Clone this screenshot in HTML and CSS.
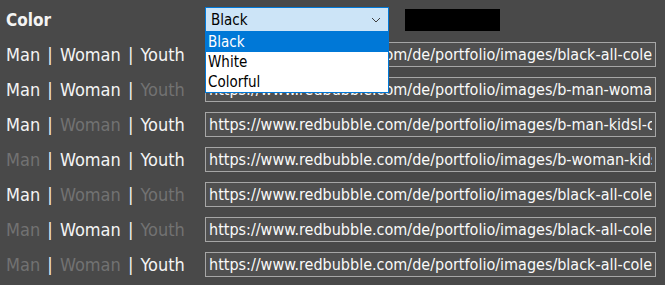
FILE: index.html
```html
<!DOCTYPE html>
<html lang="en">
<head>
  <meta charset="UTF-8" />
  <meta name="viewport" content="width=device-width, initial-scale=1.0" />
  <title>Links</title>
  <link rel="stylesheet" href="styles.css">
</head>
<body>
  <div class="table">
    <!-- color row -->
    <div class="label bold">Color</div>
    <div class="color-cell">
      <div class="select">
        <div class="select-box">
          <span>Black</span>
          <svg class="chevron" width="10" height="6" viewBox="0 0 10 6"><path d="M1 1 L5 5 L9 1" fill="none" stroke="#404040" stroke-width="1"/></svg>
        </div>
        <div class="options">
          <div class="option active">Black</div>
          <div class="option">White</div>
          <div class="option">Colorful</div>
        </div>
      </div>
      <div class="swatch"></div>
    </div>

    <!-- link rows -->
    <div class="label"><span>Man</span> | <span>Woman</span> | <span>Youth</span></div>
    <input class="link" type="text" value="https://www.redbubble.com/de/portfolio/images/black-all-colection" />

    <div class="label"><span>Man</span> | <span>Woman</span> | <span class="off">Youth</span></div>
    <input class="link" type="text" value="https://www.redbubble.com/de/portfolio/images/b-man-woman" />

    <div class="label"><span>Man</span> | <span class="off">Woman</span> | <span>Youth</span></div>
    <input class="link" type="text" value="https://www.redbubble.com/de/portfolio/images/b-man-kidsl-colection" />

    <div class="label"><span class="off">Man</span> | <span>Woman</span> | <span>Youth</span></div>
    <input class="link" type="text" value="https://www.redbubble.com/de/portfolio/images/b-woman-kids" />

    <div class="label"><span>Man</span> | <span class="off">Woman</span> | <span class="off">Youth</span></div>
    <input class="link" type="text" value="https://www.redbubble.com/de/portfolio/images/black-all-colection" />

    <div class="label"><span class="off">Man</span> | <span>Woman</span> | <span class="off">Youth</span></div>
    <input class="link" type="text" value="https://www.redbubble.com/de/portfolio/images/black-all-colection" />

    <div class="label"><span class="off">Man</span> | <span class="off">Woman</span> | <span>Youth</span></div>
    <input class="link" type="text" value="https://www.redbubble.com/de/portfolio/images/black-all-colection" />
  </div>
</body>
</html>
```
FILE: styles.css
```css
body {
  margin: 0;
  padding: 7px 0 0 6px;
  background-color: #494949;
  font-family: 'DejaVu Sans Condensed', 'DejaVu Sans', sans-serif;
  font-size: 16px;
  color: #f4f4f4;
}
.table {
  display: grid;
  grid-template-columns: 199px 451px;
  row-gap: 10px;
  align-items: center;
}
.label {
  white-space: nowrap;
  font-size: 18px;
  word-spacing: 2px;
}
.bold {
  font-weight: bold;
  font-size: 17px;
}
.off {
  color: #727272;
}
.color-cell {
  display: flex;
  align-items: center;
}
.select {
  position: relative;
  width: 184px;
}
.select-box {
  box-sizing: border-box;
  height: 25px;
  display: flex;
  align-items: center;
  justify-content: space-between;
  padding: 0 5px 0 5px;
  background-color: #cce4f7;
  border: 1px solid #0078d7;
  color: #000;
  font-size: 15px;
  word-spacing: normal;
}
.chevron {
  margin-right: 2px;
}
.options {
  position: absolute;
  top: 25px;
  left: 0;
  width: 184px;
  box-sizing: border-box;
  background-color: #fff;
  border: 1px solid #0078d7;
  border-top: none;
  z-index: 2;
}
.option {
  height: 20px;
  line-height: 20px;
  padding-left: 2px;
  color: #000;
  font-size: 15px;
}
.option.active {
  background-color: #0078d7;
  color: #fff;
}
.swatch {
  width: 95px;
  height: 22px;
  margin-left: 16px;
  background-color: #000;
}
.link {
  box-sizing: border-box;
  width: 451px;
  height: 25px;
  margin: 0;
  padding: 0 3px;
  background-color: #505050;
  border: 1px solid #a6a6a6;
  color: #fafafa;
  font-family: inherit;
  font-size: 16px;
  outline: none;
}
```
